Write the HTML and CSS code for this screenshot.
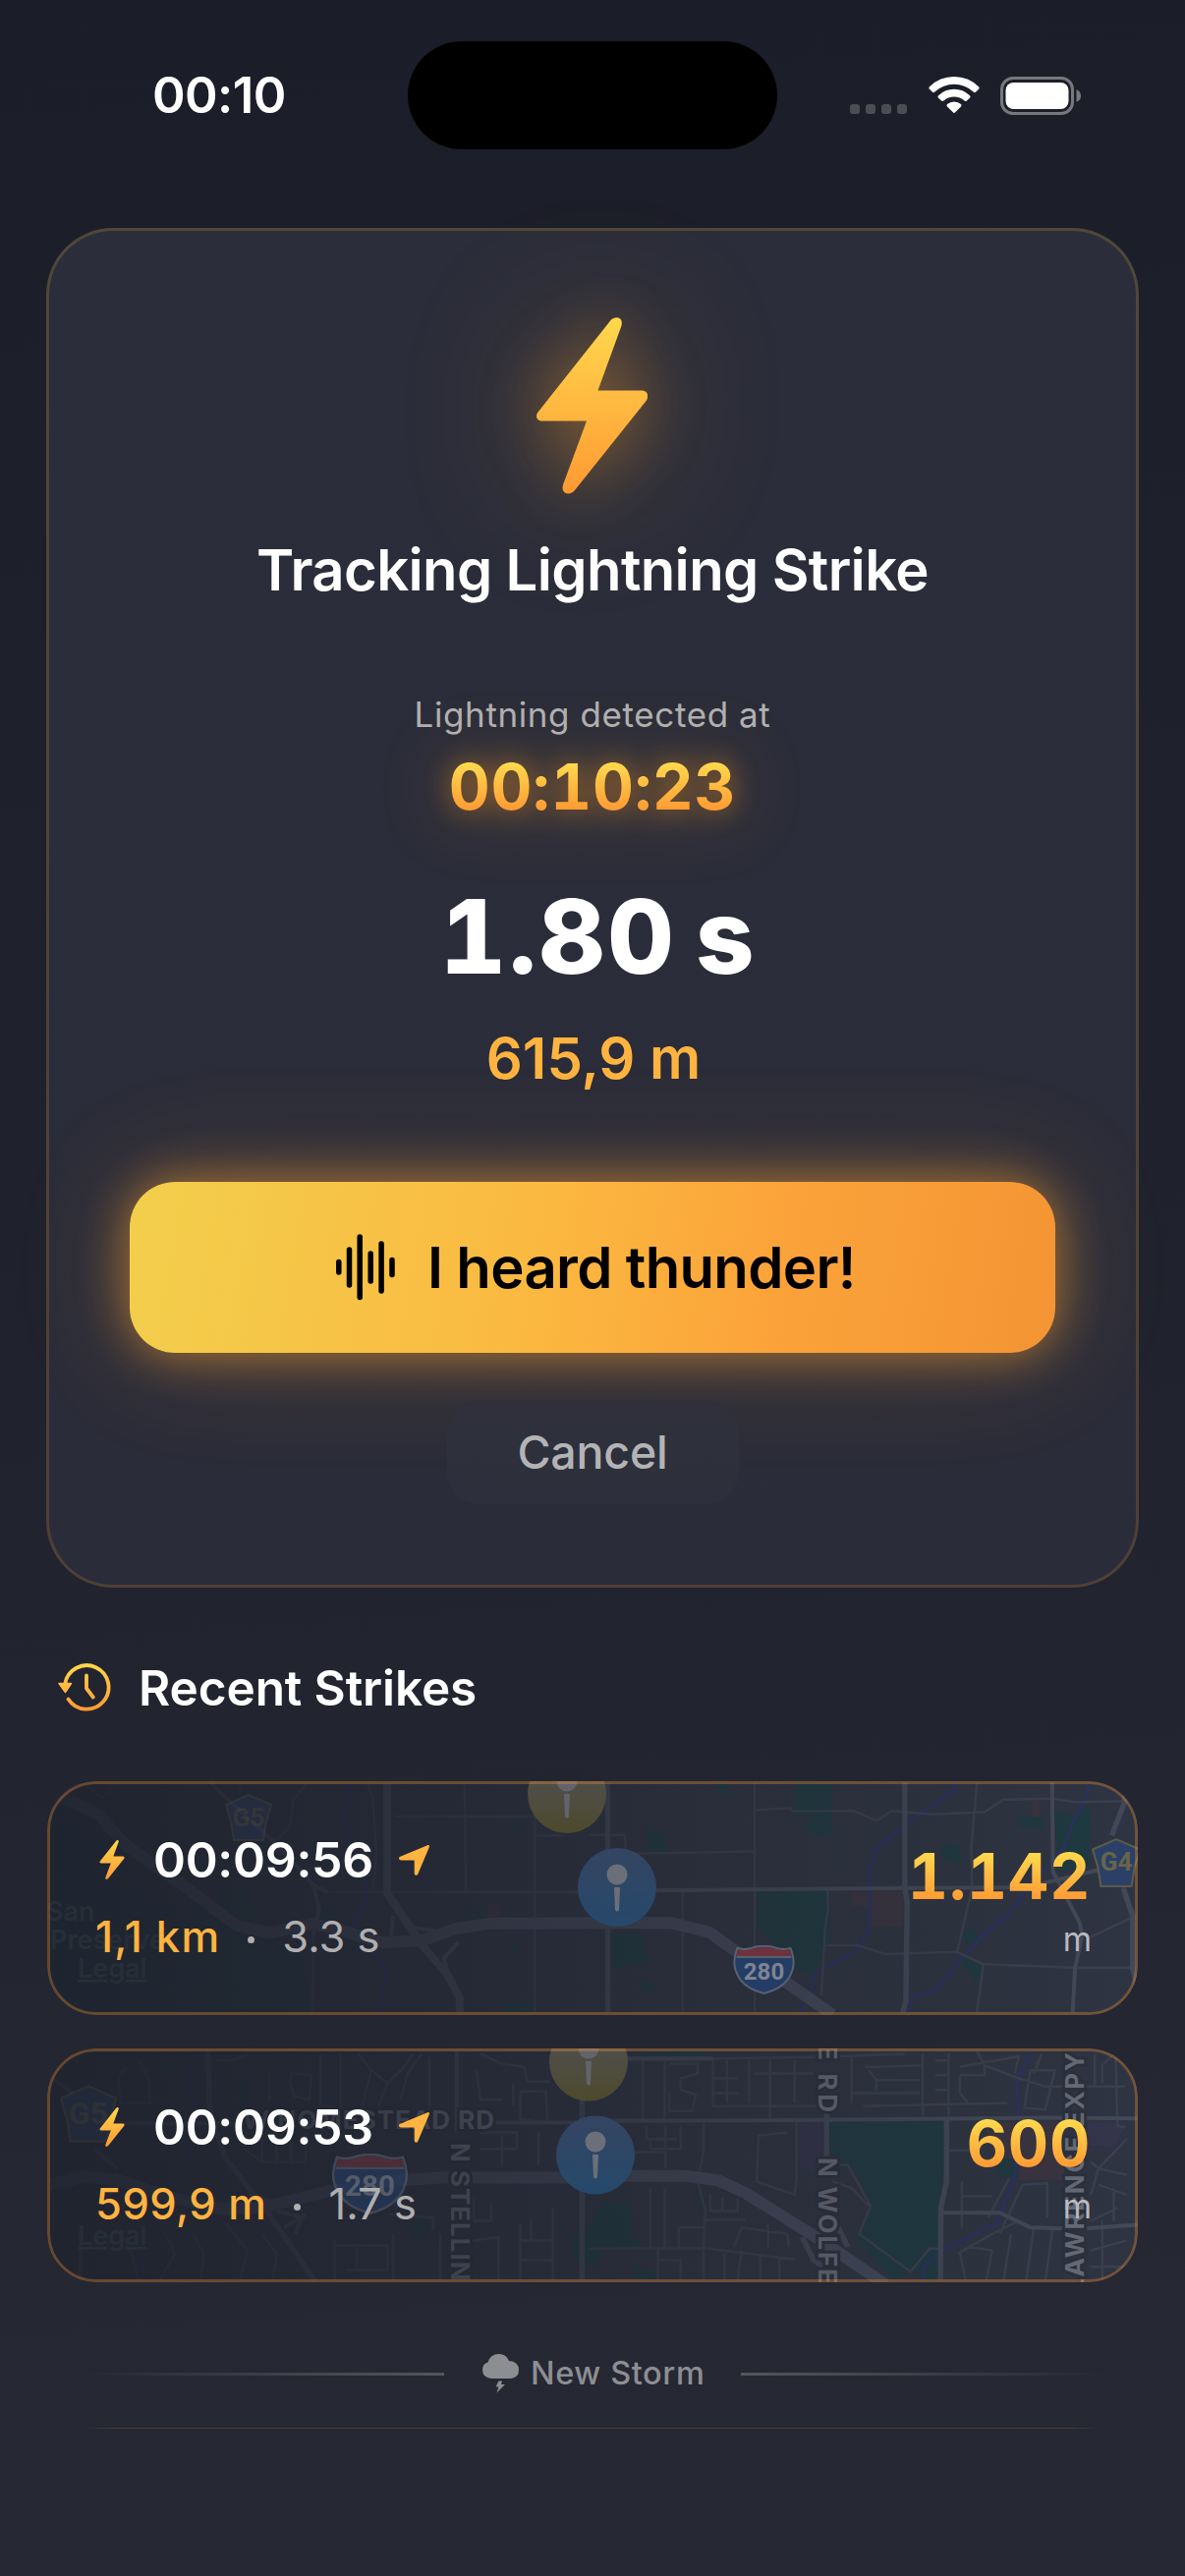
FILE: index.html
```html
<!DOCTYPE html>
<html lang="en">
<head>
<meta charset="utf-8">
<title>Lightning Tracker</title>
<link rel="stylesheet" href="styles.css">
</head>
<body>
<svg class="defs" width="0" height="0" aria-hidden="true">
  <defs>
    <linearGradient id="gold" x1="0" y1="0" x2="0" y2="1"><stop offset="0" stop-color="#ffd84d"/><stop offset="1" stop-color="#ff9933"/></linearGradient>
    <linearGradient id="bluePin" x1="0" y1="0" x2="0" y2="1"><stop offset="0" stop-color="#354663"/><stop offset="1" stop-color="#254a6e"/></linearGradient>
    <linearGradient id="yellowPin" x1="0" y1="0" x2="0" y2="1"><stop offset="0" stop-color="#52535a"/><stop offset="1" stop-color="#4f4b2c"/></linearGradient>
    <linearGradient id="fade" x1="0" y1="0" x2="1" y2="0"><stop offset="0" stop-color="#1e212c" stop-opacity=".85"/><stop offset=".25" stop-color="#1f222d" stop-opacity=".7"/><stop offset="1" stop-color="#20232e" stop-opacity="0"/></linearGradient>
    <symbol id="bolt" viewBox="0 0 113 180"><path fill="url(#gold)" d="M75.500 3C79-1 87-1 86.800 6Q86.800 8 86 10L62.500 74.500H108C113 75 114.500 80 112 84.500L39 176C35 181 26.500 181 26.500 173L27.500 169L51 105.500H6C0 105.500-1.500 100 1.500 96.500Z"/></symbol>
    <symbol id="arrow" viewBox="0 0 31 31"><path fill="#ffb340" d="M28.500.4C30.500-.4 31.400.6 30.700 2.500L19.300 29.400C18.400 31.400 15.800 31.200 15.700 28.800V16.300Q15.700 15.500 15 15.500L2 15.400C-.3 15.200-.7 12.700 1.300 11.800Z"/></symbol>
    <symbol id="shield" viewBox="0 0 62 50"><path fill="#243d66" stroke="#59616f" stroke-width="2" d="M4 3Q10 5 18 3Q27 0 31 1Q35 0 44 3Q52 5 58 3Q63 16 60 25Q55 43 31 49Q7 43 2 25Q-1 16 4 3Z"/><path fill="#6e323c" d="M5 4Q11 6 19 4Q28 1.500 31 2.500Q34 1.500 43 4Q51 6 57 4L59 11H3Z"/><path stroke="#59616f" stroke-width="2" d="M3 12H59"/><text x="31" y="34.500" class="shield-text">280</text></symbol>
    <symbol id="county" viewBox="0 0 50 50"><path fill="#2a4066" stroke="#5c5b48" stroke-width="2" stroke-linejoin="round" d="M25 2L48 12Q46 20 43 29L40 48H10L7 29Q4 20 2 12Z"/></symbol>
    <g id="pinGlyph"><circle r="10.500" cy="-13"/><path d="M-3 0H3L2 23Q0 26-2 23Z"/></g>
  </defs>
</svg>

<header class="status-bar">
  <span class="clock">00:10</span>
  <span class="island"></span>
  <span class="indicators">
    <svg class="cell" width="59" height="10" viewBox="0 0 59 10"><g fill="#4b4d55"><rect width="10" height="10" rx="3"/><rect x="16" width="10" height="10" rx="3"/><rect x="32" width="10" height="10" rx="3"/><rect x="48" width="10" height="10" rx="3"/></g></svg>
    <svg width="52" height="38" viewBox="0 0 52 38"><g fill="#fff"><path d="M26 0Q40.500 0 51 10.200Q52.300 11.500 51 12.800L48 15.700Q46.900 16.700 45.700 15.600Q37 7.800 26 7.800T6.300 15.600Q5.100 16.700 4 15.700L1 12.800Q-.3 11.500 1 10.200Q11.500 0 26 0Z"/><path d="M26 12.800Q35 12.800 42 19.200Q43.300 20.400 42 21.700L38.900 24.600Q37.800 25.600 36.600 24.600Q32 20.600 26 20.600T15.400 24.600Q14.200 25.600 13.100 24.600L10 21.700Q8.700 20.400 10 19.200Q17 12.800 26 12.800Z"/><path d="M26 25.500Q30 25.500 33 28Q34.300 29.200 33 30.500L27.200 36.300Q26 37.500 24.800 36.300L19 30.500Q17.700 29.200 19 28Q22 25.500 26 25.500Z"/></g></svg>
    <svg class="battery" width="82" height="39" viewBox="0 0 82 39"><rect x="1.500" y="1.500" width="72" height="36" rx="11.500" fill="none" stroke="#77787e" stroke-width="3"/><rect x="5.500" y="6" width="64" height="27" rx="8" fill="#fff"/><path d="M77.500 13Q82 15 82 19.500T77.500 26Z" fill="#77787e"/></svg>
  </span>
</header>

<main class="content">
  <section class="tracker">
    <svg class="tracker-bolt" width="113" height="180"><use href="#bolt"/></svg>
    <h1 class="tracker-title">Tracking Lightning Strike</h1>
    <p class="caption">Lightning detected at</p>
    <p class="detected gold-text">00:10:23</p>
    <p class="elapsed">1.80 s</p>
    <p class="distance">615,9 m</p>
    <button class="heard">
      <svg width="60" height="68" viewBox="0 0 60 68" stroke="#000" stroke-width="5.500" stroke-linecap="round"><path d="M2.800 28.500V39M13.500 16V52M24.200 3V64.500M35.200 20V48M46.100 10V58M57 26.500V41.500"/></svg>
      <span>I heard thunder!</span>
    </button>
    <button class="cancel">Cancel</button>
  </section>

  <h2 class="recent">
    <svg width="54" height="50" viewBox="0 0 54 50" fill="none" stroke="url(#goldLine)" stroke-width="3.800" stroke-linecap="round" stroke-linejoin="round"><defs><linearGradient id="goldLine" gradientUnits="userSpaceOnUse" x1="0" y1="0" x2="0" y2="49"><stop offset="0" stop-color="#ffd84d"/><stop offset="1" stop-color="#ff9933"/></linearGradient></defs><path d="M7.200 21A22.300 22.300 0 1 1 10.500 36.500"/><path d="M29 12.500V25.500L35.800 34.500"/><path fill="url(#goldLine)" stroke-width="1.500" d="M1 20.500H13.500L7.500 29.500Z"/></svg>
    <span>Recent Strikes</span>
  </h2>

  <div class="strikes">
    <article class="strike">
      <svg class="map" width="1110" height="238" viewBox="0 0 1110 238">
        <rect width="1110" height="238" fill="#2e3441"/>
        <g class="west" transform="translate(-18 -153) scale(.37 .33333)">
          <path class="park" fill-opacity=".8" d="M40 500L160 590L300 760L440 860L520 800L600 780L640 900L760 1000L770 1180H40ZM1320 590L1355 570L1350 630ZM1195 860H1255L1250 890H1200ZM1300 1135H1380V1165H1300ZM1320 970L1345 960L1350 1000ZM800 840L860 880L800 900Z"/>
          <path class="earth" d="M1262 835H1295V875H1262Z"/>
          <path class="creek" d="M885 465L865 560L880 640L925 760L930 820L885 910L940 960L985 1060L955 1165"/>
          <g class="minor"><path d="M150 465L200 510L235 470M580 465V500M765 465L725 515L715 600L680 640L655 625M930 465L945 520L955 680L945 790M1005 567H1390V625H1470M1197 465L1200 795M1390 465V1165M820 797H1568M780 930V1050L778 1165"/></g>
          <g class="road"><path d="M500 465L560 530L640 610L720 700L780 775L820 797M780 775L797 850L780 930M995 930L1000 870M1050 905L1115 915M1180 950L1140 1000L1150 1040"/></g>
          <path class="highway" d="M75 500L190 560L260 650L420 775L570 900L660 922L780 895L860 915L970 952L1080 945L1170 910L1270 893H1400L1568 892"/>
          <path class="highway thin" d="M984 465V800L1080 960L1150 1050L1183 1120V1165"/>
        </g>
        <g class="east" transform="translate(552 -23) scale(.38655 .33333)">
          <path class="park" d="M540 72H638V235L600 232L570 215L572 195L595 190L570 170L540 185ZM335 75H367V108H335ZM145 200L175 225L205 235V285H152L155 250ZM440 403H633V560L590 665L530 630L480 560L440 510ZM60 530H140L155 620L60 640ZM925 262H973V322L930 300ZM1125 180L1195 178V213L1130 205ZM1222 150L1270 175L1318 140V330L1240 345ZM1000 515L1028 545L1010 572L975 550ZM970 610L1035 625L1020 690L1000 655ZM130 672L172 690L165 722L145 710Z"/>
          <path class="earth" d="M740 405H825V512H740ZM690 410H735V450H690ZM1165 125H1187V178H1165Z"/>
          <path class="creek" d="M962 75L958 100L845 190L755 275L738 345L737 510L710 582L590 660L585 710L555 775M1312 75V110L1270 200L1250 270L1150 400L1100 480L1030 545L970 625L910 708L850 730L835 775"/>
          <g class="minor"><path d="M0 233H92L97 290L436 283M440 157L527 151L535 160H695L757 190L795 160L905 170L1040 163L1090 125L1215 122L1280 133L1430 130M1020 75L1005 270L1007 395L968 590M627 400L628 460L620 520L610 725M245 402V775M618 570H705L780 597L965 590L1035 627L1270 638H1440M1037 627L1020 775M1318 545L1440 480M435 72V775M1235 378L1340 335"/></g>
          <g class="road"><path d="M0 404L830 395L1150 393L1340 340M1218 72L1220 345L1290 500L1297 540L1278 640L1272 775"/></g>
          <path class="avenue" d="M48 75V480M48 520V775M830 72V395L836 440L833 740L825 775M1410 90L1408 135L1375 235M1405 395L1430 480V640L1442 700"/>
          <path class="highway" d="M0 502H215L315 530L375 580L520 685L640 782"/>
        </g>
        <rect width="1110" height="238" fill="url(#fade)"/>
        <g opacity=".25"><use href="#county" x="180" y="12" width="50" height="50"/><text class="county-text" x="205" y="46">G5</text></g>
        <g class="place"><text x="-1" y="142">San</text><text x="3" y="171">Preserve</text><text x="31" y="200" text-decoration="underline">Legal</text></g>
        <use href="#shield" x="698" y="167" width="63" height="50"/>
        <use href="#county" x="1062" y="57" width="52" height="52"/><text class="county-text" x="1088" y="91">G4</text>
        <circle cx="529" cy="13" r="40" fill="url(#yellowPin)" opacity=".95"/><use href="#pinGlyph" x="529" y="13" fill="#62636b"/>
        <circle cx="580" cy="108" r="40" fill="url(#bluePin)" opacity=".95"/><use href="#pinGlyph" x="580" y="108" fill="#6a6f79"/>
      </svg>
      <div class="strike-info">
        <div class="strike-time"><svg width="26" height="40"><use href="#bolt"/></svg><span class="t">00:09:56</span><svg class="loc" width="31" height="31"><use href="#arrow"/></svg></div>
        <div class="strike-meta"><span class="near km">1,1 km</span><i class="dot"></i><span class="delay">3.3 s</span></div>
      </div>
      <div class="strike-range"><strong class="gold-text">1.142</strong><small>m</small></div>
    </article>

    <article class="strike">
      <svg class="map" width="1110" height="238" viewBox="0 0 1110 238">
        <rect width="1110" height="238" fill="#2e3441"/>
        <g class="west" transform="translate(-18 -24.500) scale(.37 .33333)">
          <path class="park" d="M345 110L400 100L385 150L350 140ZM570 190L600 160L612 210L580 250ZM1055 590L1090 585L1095 630L1075 655L1055 630ZM1490 650L1568 610V740L1500 720Z"/>
          <path class="creek" d="M455 90L440 180L460 250L420 330L440 420M255 680L300 720L320 780"/>
          <g class="minor faint"><path d="M265 130L245 160L250 240H340M300 110L330 170V230M512 110H560L600 90M660 150V230M720 150L775 155L770 230L730 220L715 180ZM800 90V250H840M855 90V270M680 300V430M720 300V430M640 330V420H760V310M600 300L590 380L640 420M905 90L940 140L985 180L1030 130L1055 90M1080 90L1040 150L1020 230M985 180L960 250M940 140L915 250M1100 100V250M1230 140L1240 230H1300M1240 90L1300 120L1360 130L1370 175H1430M1330 180V250M1350 205H1420L1425 300L1350 290ZM1240 330H1340V380H1240M1300 340V430M1400 330V430M840 660V780M840 675H985V750H870M900 680V740M1000 640V780M990 580L1110 590V630M1130 640V780M1220 520V600H1270V550M1220 660L1290 650V780M1350 610V780M1350 660H1440M1380 600V660M1440 560V780M1350 720H1440M370 630L400 700L360 780M450 640L480 700L470 780M540 610L600 690L580 780M640 640L680 700L670 780M240 620L280 700L300 780"/></g>
          <g class="road"><path d="M245 303H560M1175 80V330M1280 300H1568M140 640V780M55 160L120 210M180 380L240 440M110 450V500"/></g>
          <path class="avenue" d="M490 80L497 280L540 410L660 580L785 785M1520 80V780"/>
          <path class="highway" d="M55 490L150 465L240 475L380 525L530 565L640 560L820 510L1000 478L1130 468H1568"/>
          <path class="road" d="M680 570L750 590L730 640M700 620L760 580M600 520L680 545"/>
        </g>
        <g class="east" transform="translate(552 -24.500) scale(.38655 .33333)">
          <path class="park" d="M632 296H937L935 400L925 530L920 680V780H880L850 755L800 780L700 650L745 560L700 440L635 430ZM140 82H305V98H140ZM1075 420L1125 400L1128 470L1075 465ZM0 610L40 540L110 550L115 650L150 680L0 680ZM115 740L170 755V780H115ZM280 490L300 550L290 575Z"/>
          <path class="earth" d="M1040 300H1250V475H1130V420L1060 390Z"/><path fill="#34344c" d="M1310 300H1415L1380 375L1310 370ZM552 300H610V470L552 430Z"/>
          <path class="creek" d="M1160 82L1125 180L1130 300L1120 460L1075 605L930 690L880 740L878 780"/>
          <g class="minor"><path d="M100 110L325 104L600 100L830 90M140 110V290M198 110V290M210 120H285V150L240 165V200L280 215L270 265H210V210M325 104V250H600M362 110V240M325 165H390M325 210H390M420 110V240M475 104V290M540 110V240M430 150H590M690 100V240M725 130H760L875 125M735 140L755 170H870M755 170V205M695 210H870M720 250L1100 240M877 90V280M910 110H940M910 155H940M910 200H940M945 90V280M975 130L1020 120L1130 98L1120 150M975 155H1040V110M975 155V210L1000 245M1020 82L1040 125L1130 165L1200 190H1410M1160 140L1145 255L1200 260L1225 140ZM1190 90L1170 150M1385 90L1390 310L1410 315M1330 90V190M1355 120L1380 90M1350 120V180M300 300V390L285 480L305 570L300 680M150 310V350H230M160 350V380H240V310M200 310V380M105 390H200V440M545 300V470L540 520L440 480L445 340L520 330M0 685L300 683L540 718M180 685V780M300 683V780M160 500V680M198 500V680M235 620H300M235 620V680M300 597H410M318 520V570H390V530M350 530V570M400 620L380 680M400 620L520 640L525 680M470 610V680M400 690L390 780M450 700V780M500 710V780M355 700V780M180 720H240V780M630 430H680L740 555L710 640L845 755L895 685H920M640 480L690 500L735 555M945 385H1000L1020 370M980 480V620M980 525H1060M1105 470L1050 590M1140 490L1205 485V590M1140 490L1080 640M970 700L1000 680L1060 690L1045 780M1000 680L1060 640L1130 600M1110 640L1090 780M1170 620L1150 780M1220 620L1200 780M975 700L990 780M1320 420L1340 440L1415 350M1340 440L1320 520M1340 440L1415 460M1340 490L1415 520M1320 600L1390 560M1320 690L1415 660M1320 740H1415M1350 600V780M1380 500V600"/></g>
          <g class="road"><path d="M50 104H325M0 295L610 292L1200 285L1442 287M930 575H1080L1160 620L1290 625L1442 612"/></g>
          <path class="avenue" d="M624 270V410M940 290V480L925 560L924 780M560 650L590 720L630 750M630 560L680 680"/>
          <path class="highway" d="M0 463H255L340 477L410 515L590 645L780 795"/>
        </g>
        <g class="streets"><text transform="translate(199 82)" textLength="256">W HOMESTEAD RD</text><text transform="translate(411 96) rotate(90)" textLength="206">N STELLING RD</text><text transform="translate(785 -4) rotate(90)" textLength="69">E RD</text><text transform="translate(785 111) rotate(90)" textLength="176">N WOLFE RD</text><text transform="translate(1055 249) rotate(-90)" textLength="245">LAWRENCE EXPY</text></g>
        <rect width="1110" height="238" fill="url(#fade)"/>
        <g opacity=".2"><use href="#county" x="10" y="36" width="64" height="61"/><text class="county-text big" x="42" y="77">G5</text></g>
        <g class="place"><text x="31" y="200" text-decoration="underline">Legal</text></g>
        <use href="#shield" x="290" y="107" width="77" height="62" opacity=".55"/>
        <circle cx="551" cy="13.500" r="40" fill="url(#yellowPin)" opacity=".95"/><use href="#pinGlyph" x="551" y="13" fill="#62636b"/>
        <circle cx="558" cy="108.500" r="40" fill="url(#bluePin)" opacity=".95"/><use href="#pinGlyph" x="558" y="108" fill="#6a6f79"/>
      </svg>
      <div class="strike-info">
        <div class="strike-time"><svg width="26" height="40"><use href="#bolt"/></svg><span class="t">00:09:53</span><svg class="loc" width="31" height="31"><use href="#arrow"/></svg></div>
        <div class="strike-meta"><span class="near">599,9 m</span><i class="dot"></i><span class="delay">1.7 s</span></div>
      </div>
      <div class="strike-range"><strong class="gold-text">600</strong><small>m</small></div>
    </article>
  </div>

  <div class="storm">
    <span class="rule"></span>
    <svg width="37" height="40" viewBox="0 0 37 40" fill="#8d8e92"><path d="M9 25Q0 24 0 16Q0 10 5.500 8.500Q8 0 16.500 0Q24 0 27 7Q37 7.500 37 16.500Q37 24 29 25Z"/><path d="M16.500 27.500H20L19 31H23L14.500 39.500L16.500 33.500H13.500Z"/></svg>
    <span class="storm-label">New Storm</span>
    <span class="rule end"></span>
  </div>
  <hr class="divider">
</main>
</body>
</html>
```
FILE: styles.css
```css
* { box-sizing: border-box; }

body {
  margin: 0;
  width: 1206px;
  height: 2622px;
  overflow: hidden;
  font-family: Inter, "Liberation Sans", sans-serif;
  color: #fff;
  background: linear-gradient(176deg, #1b1d28 0%, #20222d 50%, #262833 95%);
}

h1, h2, p { margin: 0; }
button { border: 0; font: inherit; }
svg { display: block; flex: none; }
.defs { position: absolute; }

.gold-text {
  color: transparent;
  background: linear-gradient(#ffd84d 20%, #ff9933 82%);
  -webkit-background-clip: text;
  background-clip: text;
}

/* Status bar */
.status-bar {
  display: grid;
  grid-template-columns: 415px 376px 415px;
  align-items: center;
  height: 152px;
  padding-top: 42px;
}
.clock { padding-left: 155px; font-size: 51px; font-weight: 600; line-height: 60px; letter-spacing: -.6px; }
.island { height: 110px; border-radius: 55px; background: #000; }
.indicators { display: flex; align-items: center; padding-left: 74px; }
.indicators .cell { margin: 27px 21px 0 0; }
.indicators .battery { margin-left: 21px; }

/* Current strike */
.content { padding: 80px 47px 0; }
.tracker {
  display: flex;
  flex-direction: column;
  align-items: center;
  height: 1384px;
  padding-top: 88px;
  border: 3px solid transparent;
  border-radius: 68px;
  background:
    linear-gradient(#2b2d3a, #2b2c39) padding-box,
    linear-gradient(#4f4838, #4f3f37) border-box;
}
.tracker-bolt {
  overflow: visible;
  margin-right: 1px;
  filter: drop-shadow(0 0 34px rgba(255, 159, 40, .45)) drop-shadow(0 0 70px rgba(255, 180, 60, .3));
}
.tracker-title { margin-top: 42px; font-size: 58px; font-weight: 600; line-height: 70px; letter-spacing: -.62px; }
.caption { margin-top: 90px; font-size: 35px; line-height: 44px; letter-spacing: .6px; color: #b1b0b1; }
.detected {
  margin-top: 13px;
  font-size: 65px;
  font-weight: 700;
  font-variant-numeric: tabular-nums;
  line-height: 78px;
  letter-spacing: .7px;
  filter: drop-shadow(0 0 13px rgba(255, 149, 30, .55)) drop-shadow(0 0 34px rgba(255, 170, 40, .3));
}
.elapsed {
  margin-top: 53px;
  padding-left: 12px;
  font-size: 104.5px;
  font-weight: 850;
  line-height: 120px;
  font-variant-numeric: tabular-nums;
  letter-spacing: 2.5px;
  word-spacing: -11px;
}
.distance { margin-top: 29px; padding-left: 2px; font-size: 58px; font-weight: 600; line-height: 70px; color: #ffb340; }

.heard {
  display: flex;
  align-items: center;
  gap: 33px;
  width: 942px;
  height: 174px;
  margin-top: 91px;
  padding: 0 0 0 210px;
  border-radius: 46px;
  color: #000;
  font-size: 58px;
  font-weight: 600;
  letter-spacing: -.65px;
  background: linear-gradient(100deg, #f2cf4c, #fbb840 45%, #fba43a 68%, #f49434);
  box-shadow: 0 0 50px rgba(255, 160, 50, .6), 0 0 120px rgba(255, 175, 60, .2);
}
.cancel {
  width: 297px;
  height: 106px;
  margin-top: 48px;
  padding: 0;
  border-radius: 34px;
  color: #b3b3b5;
  font-size: 46.5px;
  font-weight: 500;
  line-height: 106px;
  letter-spacing: -.2px;
  background: linear-gradient(#2f303c, #2d303c);
}

/* Recent strikes */
.recent {
  display: flex;
  align-items: center;
  gap: 28px;
  margin-top: 72px;
  padding-left: 12px;
  font-size: 49.5px;
  font-weight: 600;
  line-height: 60px;
  letter-spacing: -.1px;
}
.strikes { display: grid; gap: 34px; margin-top: 65px; padding: 0 1px; }
.strike {
  display: flex;
  justify-content: space-between;
  position: relative;
  height: 238px;
  padding: 50px 48px 0 49px;
  border-radius: 50px;
  overflow: hidden;
}
.strike::after {
  content: "";
  position: absolute;
  inset: 0;
  border: 3px solid rgba(255, 149, 50, .32);
  border-radius: 50px;
}
.map { position: absolute; inset: 0; }
.park { fill: #1f3a41; }
.earth { fill: #3a3440; }
.creek { fill: none; stroke: #2b3260; stroke-width: 3; }
.minor, .road, .avenue, .highway { fill: none; stroke: #3b404e; }
.minor { stroke-width: 2.5px; }
.minor.faint { stroke: #3e4351; }
.road { stroke: #434957; stroke-width: 4px; }
.avenue { stroke: #414857; stroke-width: 5.5px; }
.highway { stroke: #434a5b; stroke-width: 12px; stroke-linejoin: round; }
.highway.thin { stroke-width: 8px; }
.map path { vector-effect: non-scaling-stroke; }
.shield-text { fill: #7d8592; font: 700 24px Roboto, sans-serif; text-anchor: middle; stroke: none; }
.county-text { fill: #67654a; font: 700 26px Roboto, sans-serif; text-anchor: middle; }
.county-text.big { font-size: 32px; }
.place { fill: #262e37; font: 600 27px Inter, sans-serif; }
.streets { fill: #666d79; stroke: #2b303c; stroke-width: 6px; paint-order: stroke; font: 700 26px Inter, sans-serif; }

.strike-info, .strike-range { position: relative; display: flex; flex-direction: column; }
.strike-info { gap: 21px; }
.strike-time { display: flex; align-items: center; padding-left: 4px; font-size: 50px; font-weight: 600; line-height: 60px; letter-spacing: -.3px; }
.strike-time .t { width: 225px; margin-left: 29px; }
.strike-time .loc { margin-left: 25px; }
.strike-meta { display: flex; align-items: center; font-size: 43.5px; line-height: 54px; }
.near { color: #ffb340; font-weight: 500; letter-spacing: .5px; }
.near.km { letter-spacing: 1.2px; }
.dot { width: 7px; height: 7px; margin: 6px 28px 0; border-radius: 50%; background: #b0afb0; }
.delay { color: #b0afb0; }
.strike-range { align-items: flex-end; padding-top: 8px; }
.strike-range strong { font-size: 64px; line-height: 78px; font-variant-numeric: tabular-nums; letter-spacing: .7px; }
.strike-range small { margin: 5px -1px 0 0; font-size: 33.5px; line-height: 40px; color: #b9bac0; }

/* Storm separator */
.storm { display: flex; align-items: center; height: 40px; margin: 73px 33px 0; color: #8d8e92; }
.rule { width: 372px; height: 3px; background: linear-gradient(90deg, transparent, #54565c); }
.rule.end { background: linear-gradient(270deg, transparent, #54565c); margin-left: auto; }
.storm svg { margin-left: 39px; }
.storm-label { margin-left: 12px; font-size: 32.5px; font-weight: 500; line-height: 40px; letter-spacing: .6px; }
.divider { height: 1px; margin: 35px 37px 0; border: 0; background: linear-gradient(90deg, transparent, #4a3c3a 3%, #4a3c3a 97%, transparent); }
```
